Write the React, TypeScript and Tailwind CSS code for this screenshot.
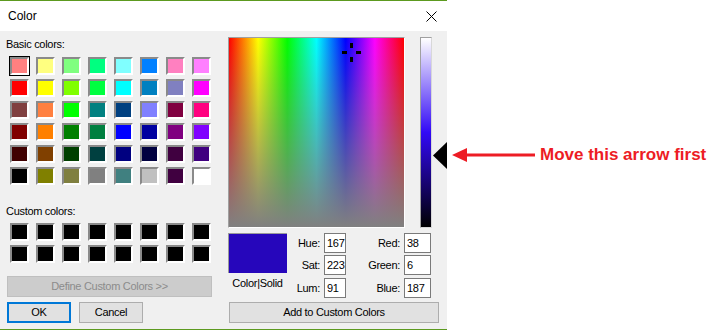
const basicColors = [
  ["bg-[#ff8080]", "bg-[#ffff80]", "bg-[#80ff80]", "bg-[#00ff80]", "bg-[#80ffff]", "bg-[#0080ff]", "bg-[#ff80c0]", "bg-[#ff80ff]"],
  ["bg-[#ff0000]", "bg-[#ffff00]", "bg-[#80ff00]", "bg-[#00ff40]", "bg-[#00ffff]", "bg-[#0080c0]", "bg-[#8080c0]", "bg-[#ff00ff]"],
  ["bg-[#804040]", "bg-[#ff8040]", "bg-[#00ff00]", "bg-[#008080]", "bg-[#004080]", "bg-[#8080ff]", "bg-[#800040]", "bg-[#ff0080]"],
  ["bg-[#800000]", "bg-[#ff8000]", "bg-[#008000]", "bg-[#008040]", "bg-[#0000ff]", "bg-[#0000a0]", "bg-[#800080]", "bg-[#8000ff]"],
  ["bg-[#400000]", "bg-[#804000]", "bg-[#004000]", "bg-[#004040]", "bg-[#000080]", "bg-[#000040]", "bg-[#400040]", "bg-[#400080]"],
  ["bg-[#000000]", "bg-[#808000]", "bg-[#808040]", "bg-[#808080]", "bg-[#408080]", "bg-[#c0c0c0]", "bg-[#400040]", "bg-[#ffffff]"],
]

const customColors = Array.from({ length: 16 }, () => "bg-black")

const hsl = [
  { label: "Hue:", value: "167", gap: "" },
  { label: "Sat:", value: "223", gap: "mt-[2px]" },
  { label: "Lum:", value: "91", gap: "mt-[3px]" },
]

const rgb = [
  { label: "Red:", value: "38", gap: "" },
  { label: "Green:", value: "6", gap: "mt-[2px]" },
  { label: "Blue:", value: "187", gap: "mt-[3px]" },
]

function Swatch({ color, selected }: { color: string; selected?: boolean }) {
  return (
    <div
      className={
        "w-[19px] h-[18px] border-2 border-t-[#8a8a8a] border-l-[#8a8a8a] border-r-white border-b-white " +
        color +
        (selected ? " outline outline-1 outline-black" : "")
      }
    />
  )
}

function NumBox({ value, width }: { value: string; width: string }) {
  return (
    <div className={"ml-[4px] h-[20px] bg-white border border-[#7a7a7a] pl-[2px] leading-[18px] text-black " + width}>
      {value}
    </div>
  )
}

export default function App() {
  return (
    <div className="w-[719px] h-[331px] bg-white flex font-['Liberation_Sans',Arial,sans-serif] text-[11px] tracking-[-0.3px] text-black">
      {/* dialog */}
      <div className="w-[447px] h-[330px] flex flex-col border-t border-b border-[#5c9a1f]">
        <div className="h-[30px] bg-white flex items-center justify-between">
          <span className="pl-[8px] text-[12px] tracking-normal">Color</span>
          <svg className="mr-[10px]" width="11" height="11" viewBox="0 0 11 11">
            <path d="M0.5 0.5 L10.5 10.5 M10.5 0.5 L0.5 10.5" stroke="#000" strokeWidth="1" fill="none" />
          </svg>
        </div>

        <div className="flex-1 bg-[#f0f0f0] flex">
          {/* left column */}
          <div className="w-[228px] flex flex-col">
            <div className="mt-[6px] pl-[6px] h-[15px] leading-[15px]">Basic colors:</div>
            <div className="mt-[5px] ml-[10px] grid grid-cols-[repeat(8,19px)] gap-x-[7px] gap-y-[4px]">
              {basicColors.flat().map((c, i) => (
                <Swatch key={i} color={c} selected={i === 0} />
              ))}
            </div>
            <div className="mt-[19px] pl-[6px] h-[15px] leading-[15px]">Custom colors:</div>
            <div className="mt-[4px] ml-[10px] grid grid-cols-[repeat(8,19px)] gap-x-[7px] gap-y-[4px]">
              {customColors.map((c, i) => (
                <Swatch key={i} color={c} />
              ))}
            </div>
            <div className="mt-[13px] ml-[7px] w-[205px] h-[21px] bg-[#cccccc] border border-[#bfbfbf] flex items-center justify-center text-[#8b8b8b]">
              Define Custom Colors &gt;&gt;
            </div>
            <div className="mt-[5px] ml-[7px] flex gap-[8px]">
              <div className="w-[64px] h-[21px] bg-[#e1e1e1] border-2 border-[#0078d7] flex items-center justify-center">
                OK
              </div>
              <div className="w-[64px] h-[21px] bg-[#e1e1e1] border border-[#adadad] flex items-center justify-center">
                Cancel
              </div>
            </div>
          </div>

          {/* right column */}
          <div className="flex flex-col">
            <div className="mt-[6px] flex items-start">
              <div className="relative w-[177px] h-[191px] border border-[#a0a0a0] border-r-white border-b-white bg-[image:linear-gradient(to_bottom,rgba(128,128,128,0),#808080),linear-gradient(to_right,#ff0000,#ffff00,#00ff00,#00ffff,#0000ff,#ff00ff,#ff0000)]">
                <svg className="absolute left-[113px] top-[5px]" width="19" height="19" viewBox="0 0 19 19">
                  <rect x="8" y="0" width="3" height="5" fill="#000" />
                  <rect x="0" y="8" width="5" height="3" fill="#000" />
                  <rect x="14" y="8" width="5" height="3" fill="#000" />
                  <rect x="8" y="14" width="3" height="5" fill="#000" />
                </svg>
              </div>
              <div className="ml-[15px] w-[12px] h-[191px] border border-[#a0a0a0] border-r-[#d8d8d8] border-b-[#d8d8d8] bg-[image:linear-gradient(to_bottom,#ffffff,#3209f6,#000000)]" />
              <svg className="ml-[1px] mt-[105px]" width="14" height="27" viewBox="0 0 14 27">
                <polygon points="0,13.5 14,0 14,27" fill="#000" />
              </svg>
            </div>

            <div className="mt-[5px] flex items-start">
              <div className="w-[59px] flex flex-col items-center">
                <div className="w-[59px] h-[40px] bg-[#2606bb] border-t border-l border-[#9a9a9a] border-r-[#f0f0f0] border-b-[#f0f0f0]" />
                <span className="mt-[3px] leading-[14px] whitespace-nowrap">Color|Solid</span>
              </div>
              <div className="flex flex-col">
                {hsl.map((r) => (
                  <div key={r.label} className={"flex items-center " + r.gap}>
                    <span className="w-[33px] text-right">{r.label}</span>
                    <NumBox value={r.value} width="w-[22px]" />
                  </div>
                ))}
              </div>
              <div className="flex flex-col">
                {rgb.map((r) => (
                  <div key={r.label} className={"flex items-center " + r.gap}>
                    <span className="w-[54px] text-right">{r.label}</span>
                    <NumBox value={r.value} width="w-[27px]" />
                  </div>
                ))}
              </div>
            </div>

            <div className="mt-[4px] ml-[1px] w-[210px] h-[21px] bg-[#e1e1e1] border border-[#adadad] flex items-center justify-center">
              Add to Custom Colors
            </div>
          </div>
        </div>
      </div>

      {/* annotation */}
      <div className="flex-1">
        <div className="mt-[145px] ml-[5px] h-[20px] flex items-center">
          <svg width="83" height="14" viewBox="0 0 83 14">
            <polygon points="0,7 15,0 15,14" fill="#ed1c24" />
            <rect x="14" y="5.5" width="69" height="3" fill="#ed1c24" />
          </svg>
          <span className="ml-[5px] text-[17px] font-bold tracking-normal text-[#ed1c24] whitespace-nowrap">
            Move this arrow first
          </span>
        </div>
      </div>
    </div>
  )
}
